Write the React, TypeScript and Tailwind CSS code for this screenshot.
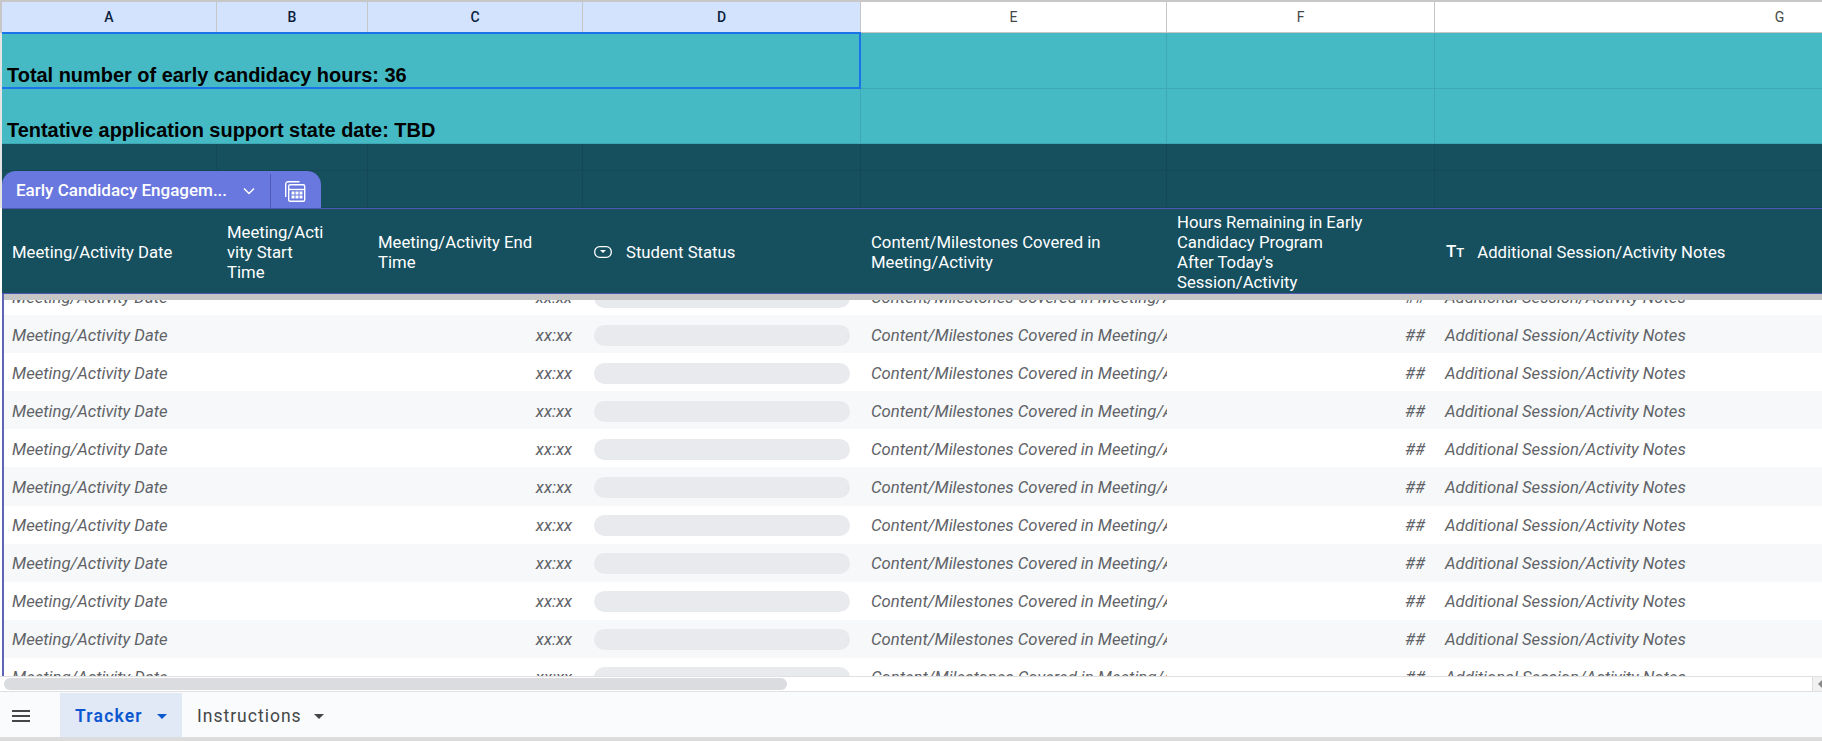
import type { ReactNode } from "react";

const bodyFont = "font-['Roboto',sans-serif]";
const cols = [
  { l: "A", w: "w-[215px]", sel: true },
  { l: "B", w: "w-[151px]", sel: true },
  { l: "C", w: "w-[215px]", sel: true },
  { l: "D", w: "w-[278px]", sel: true },
  { l: "E", w: "w-[306px]", sel: false },
  { l: "F", w: "w-[268px]", sel: false },
  { l: "G", w: "w-[690px]", sel: false },
];

function ColumnHeader() {
  return (
    <div className="flex h-[33px] shrink-0 overflow-hidden pl-[2px] bg-[#c7c7c7] border-t-[2px] border-[#c7c7c7]">
      {cols.map((c) => (
        <div
          key={c.l}
          className={`${c.w} shrink-0 flex items-center justify-center border-r border-b border-[#c7c7c7] text-[14px] ${c.sel ? "bg-[#d3e3fd] text-[#0b1f3f] font-medium" : "bg-white text-[#444746]"}`}
        >
          {c.l}
        </div>
      ))}
    </div>
  );
}

function BandRow({ h, dark, hide = 0, children }: { h: string; dark?: boolean; hide?: number; children?: ReactNode }) {
  const line = dark ? "border-[#144856]" : "border-[#3fa9b3]";
  return (
    <div className={`flex ${h} relative border-b ${line} ${dark ? "bg-[#16505f]" : "bg-[#45bac5]"}`}>
      {cols.map((c, i) => (
        <div key={c.l} className={`${c.w} shrink-0 ${i < hide ? "" : `border-r ${line}`}`} />
      ))}
      {children}
    </div>
  );
}

function StatusIcon() {
  return (
    <svg width="18" height="12" viewBox="0 0 18 12" fill="none" className="shrink-0 -mt-[2px]">
      <rect x="0.7" y="0.7" width="16.6" height="10.6" rx="5" stroke="white" strokeWidth="1.3" />
      <path d="M6 4h6l-3 3z" fill="white" />
    </svg>
  );
}

function CalcIcon() {
  return (
    <svg width="22" height="22" viewBox="0 0 22 22" fill="none">
      <path d="M1.7 17V4A2.3 2.3 0 0 1 4 1.7H15.5" stroke="white" strokeWidth="1.4" />
      <rect x="4.7" y="4.7" width="16" height="16.6" rx="1.5" stroke="white" strokeWidth="1.4" />
      <path d="M4.7 9.5h16" stroke="white" strokeWidth="1.4" />
      <path
        d="M7.5 11.5h3v3h-3zM11.5 11.5h3v3h-3zM15.5 11.5h3v3h-3zM7.5 15.5h3v3h-3zM11.5 15.5h3v3h-3zM15.5 15.5h3v3h-3z"
        fill="white"
      />
    </svg>
  );
}

function Row({ alt }: { alt: boolean }) {
  return (
    <div className={`flex h-[38.1px] shrink-0 items-center pt-[2px] text-[16.7px] italic text-[#5f6368] ${alt ? "bg-[#f6f8f9]" : "bg-white"}`}>
      <div className="w-[213px] shrink-0 pl-[8px] whitespace-nowrap">Meeting/Activity Date</div>
      <div className="w-[151px] shrink-0" />
      <div className="w-[215px] shrink-0 pr-[11px] text-right">xx:xx</div>
      <div className="w-[278px] shrink-0 pl-[11px] pr-[11px]">
        <div className="h-[21px] rounded-full bg-[#e8eaed]" />
      </div>
      <div className="w-[306px] shrink-0 pl-[10px] overflow-hidden whitespace-nowrap">Content/Milestones Covered in Meeting/Activity</div>
      <div className="w-[268px] shrink-0 pr-[10px] text-right">##</div>
      <div className="flex-1 pl-[10px] whitespace-nowrap">Additional Session/Activity Notes</div>
    </div>
  );
}

export default function App() {
  return (
    <div className={`w-[1822px] h-[741px] overflow-hidden bg-white flex flex-col ${bodyFont}`}>
      <ColumnHeader />
      <div className="pl-[2px] relative flex flex-col bg-[#e4e4e4] shrink-0">
        <BandRow h="h-[56px]" hide={4}>
          <div className="absolute left-[5px] bottom-[1px] text-[19.95px] leading-[24px] font-bold text-black font-['Liberation_Sans',sans-serif] whitespace-nowrap">
            Total number of early candidacy hours: 36
          </div>
        </BandRow>
        <BandRow h="h-[55px]" hide={3}>
          <div className="absolute left-[5px] bottom-[1px] text-[19.95px] leading-[24px] font-bold text-black font-['Liberation_Sans',sans-serif] whitespace-nowrap">
            Tentative application support state date: TBD
          </div>
        </BandRow>
        <div className="absolute left-[2px] top-[-1px] w-[859px] h-[57px] border-2 border-l-0 border-[#1a73e8] pointer-events-none z-10" />
        <BandRow h="h-[27px]" dark />
        <div className="relative">
          <BandRow h="h-[37px]" dark />
          <div className="absolute left-0 bottom-0 h-[37px] w-[319px] bg-[#6878de] rounded-t-[14px] flex items-center pt-[3px] text-white text-[17px] font-medium">
            <div className="w-[269px] h-full flex items-center pl-[14px] border-r border-[#4f5bb5] whitespace-nowrap">
              <span>Early Candidacy Engagem...</span>
              <svg width="14" height="14" viewBox="0 0 14 14" fill="none" className="ml-[15px]">
                <path d="M2 4.5l5 5 5-5" stroke="white" strokeWidth="1.5" />
              </svg>
            </div>
            <div className="flex-1 flex items-center justify-center -ml-[2px]">
              <CalcIcon />
            </div>
          </div>
        </div>
      </div>
      <div className="ml-[2px] shrink-0 flex h-[86px] pt-[3px] bg-[#16505f] border-t border-b border-[#4f57b3] text-white text-[16.7px] leading-[20px] items-stretch overflow-hidden">
        <div className="w-[215px] shrink-0 flex items-center pl-[10px]">Meeting/Activity Date</div>
        <div className="w-[151px] shrink-0 flex items-center pl-[10px]">
          <span>
            Meeting/Acti
            <br />
            vity Start
            <br />
            Time
          </span>
        </div>
        <div className="w-[215px] shrink-0 flex items-center pl-[10px]">
          <span>
            Meeting/Activity End
            <br />
            Time
          </span>
        </div>
        <div className="w-[278px] shrink-0 flex items-center gap-[14px] pl-[11px]">
          <StatusIcon />
          Student Status
        </div>
        <div className="w-[306px] shrink-0 flex items-center pl-[10px]">
          <span>
            Content/Milestones Covered in
            <br />
            Meeting/Activity
          </span>
        </div>
        <div className="w-[268px] shrink-0 flex items-center pl-[10px]">
          <span>
            Hours Remaining in Early
            <br />
            Candidacy Program
            <br />
            After Today's
            <br />
            Session/Activity
          </span>
        </div>
        <div className="flex-1 flex items-center gap-[13px] pl-[11px]">
          <span className="text-[17px] font-medium leading-none -mt-[2px]">
            T<span className="text-[13px]">T</span>
          </span>
          Additional Session/Activity Notes
        </div>
      </div>
      <div className="relative h-[382px] shrink-0 ml-[2px] overflow-hidden border-l-2 border-[#6064b4]">
        <div className="absolute left-[-2px] right-0 top-0 h-[6px] bg-[#c6c6c6] z-10" />
        <div className="flex flex-col -mt-[17px]">
          {Array.from({ length: 11 }).map((_, i) => (
            <Row key={i} alt={i % 2 === 1} />
          ))}
        </div>
      </div>
      <div className="h-[16px] shrink-0 border-y border-[#e0e0e0] bg-white flex items-center">
        <div className="ml-[4px] w-[783px] h-[12px] rounded-full bg-[#dadce0]" />
        <div className="ml-auto w-[10px] h-full bg-[#f1f1f1] border-l border-[#e0e0e0] flex items-center justify-end">
          <span className="w-0 h-0 border-y-[4px] border-y-transparent border-r-[4px] border-r-[#8a8a8a]" />
        </div>
      </div>
      <div className="h-[45px] shrink-0 pt-[3px] bg-[#f9fbfd] flex items-stretch text-[17.5px] tracking-[1px]">
        <div className="w-[60px] flex items-center pl-[12px] -mt-[1px]">
          <svg width="18" height="12" viewBox="0 0 18 12" fill="#444746">
            <rect y="0" width="18" height="2" />
            <rect y="5" width="18" height="2" />
            <rect y="10" width="18" height="2" />
          </svg>
        </div>
        <div className="w-[122px] -mt-[2px] bg-[#e1e9f7] flex items-center pt-[2px] pl-[15px] text-[#0b57d0] font-semibold tracking-[1.2px]">
          Tracker
          <span className="ml-[14px] w-0 h-0 border-x-[5px] border-x-transparent border-t-[5px] border-t-[#0b57d0]" />
        </div>
        <div className="flex items-center pl-[15px] text-[#444746]">
          Instructions
          <span className="ml-[12px] w-0 h-0 border-x-[5px] border-x-transparent border-t-[5px] border-t-[#444746]" />
        </div>
      </div>
      <div className="flex-1 bg-[#dcdcdc]" />
    </div>
  );
}
